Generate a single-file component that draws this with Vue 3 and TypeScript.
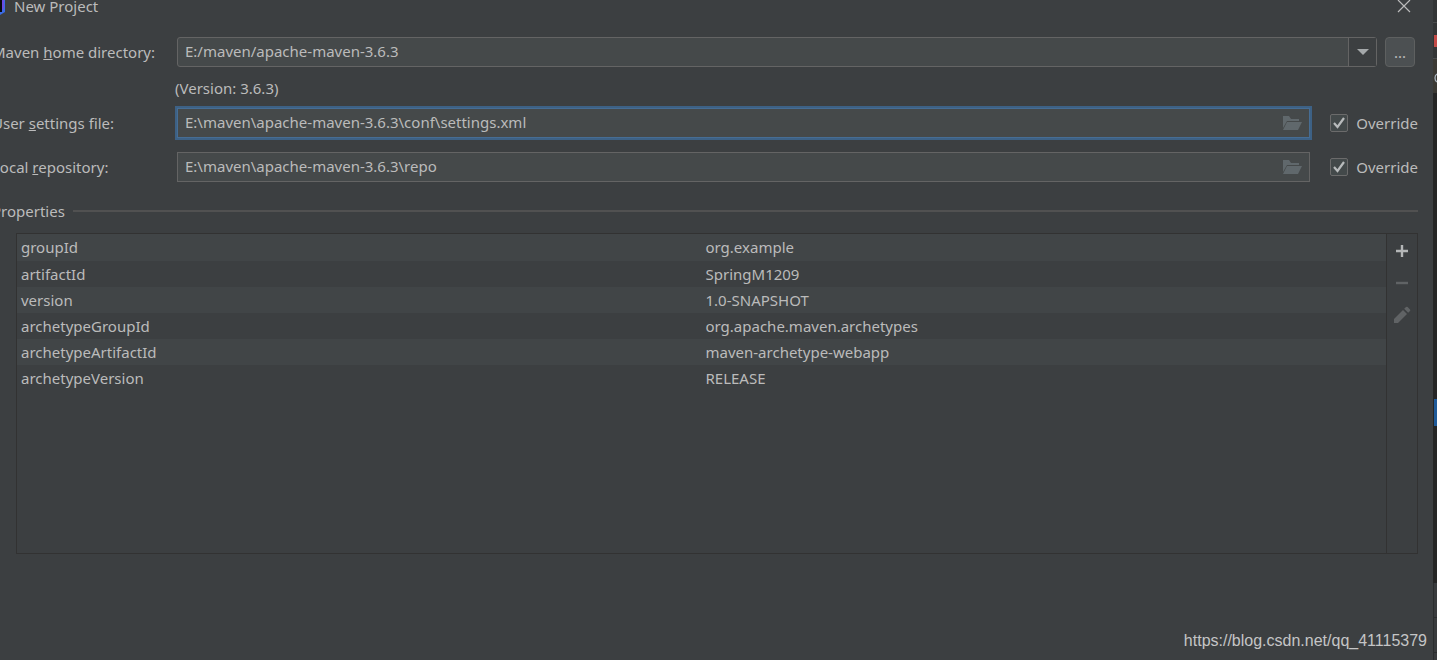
<script setup lang="ts">
import { ref } from 'vue'

interface Property {
  name: string
  value: string
}

const mavenHome = ref('E:/maven/apache-maven-3.6.3')
const settingsFile = ref('E:\\maven\\apache-maven-3.6.3\\conf\\settings.xml')
const repository = ref('E:\\maven\\apache-maven-3.6.3\\repo')
const overrideSettings = ref(true)
const overrideRepository = ref(true)

const properties: Property[] = [
  { name: 'groupId', value: 'org.example' },
  { name: 'artifactId', value: 'SpringM1209' },
  { name: 'version', value: '1.0-SNAPSHOT' },
  { name: 'archetypeGroupId', value: 'org.apache.maven.archetypes' },
  { name: 'archetypeArtifactId', value: 'maven-archetype-webapp' },
  { name: 'archetypeVersion', value: 'RELEASE' },
]
</script>

<template>
  <div class="screen">
    <main class="dialog">
      <header class="titlebar">
        <svg class="logo" width="14" height="15" viewBox="0 0 14 15" aria-hidden="true">
          <path d="M0 0H13V12L8 15H0Z" fill="#3b6be6" />
          <path d="M9 0H12V8L9 12Z" fill="#6a4be0" />
          <path d="M0 0H10V12H0Z" fill="#08080c" />
        </svg>
        <h1>New Project</h1>
        <button class="close" type="button" aria-label="Close">
          <svg width="14" height="14" viewBox="0 0 14 14" aria-hidden="true">
            <path d="M1 0L13 12M13 0L1 12" stroke="#bbbbbb" stroke-width="1.2" fill="none" />
          </svg>
        </button>
      </header>

      <form class="form" @submit.prevent>
        <label for="home">Maven <u>h</u>ome directory:</label>
        <div class="home">
          <div class="combo">
            <input id="home" v-model="mavenHome" type="text" spellcheck="false" />
            <button class="arrow" type="button" aria-label="Show Maven homes">
              <svg width="12" height="7" viewBox="0 0 12 7" aria-hidden="true">
                <path d="M0 0H12L6 6Z" fill="#a4a8aa" />
              </svg>
            </button>
          </div>
          <button class="browse" type="button" aria-label="Browse">...</button>
        </div>

        <p class="version">(Version: 3.6.3)</p>

        <label for="settings">User <u>s</u>ettings file:</label>
        <div class="path">
          <div class="field focused">
            <input id="settings" v-model="settingsFile" type="text" spellcheck="false" />
            <button class="folder" type="button" aria-label="Choose settings file">
              <svg width="20" height="16" viewBox="0 0 20 16" aria-hidden="true">
                <path d="M1 1H7L9 4H17V6H5L1 13Z" fill="#60686c" />
                <path d="M5 7H20L16 15H1Z" fill="#60686c" />
              </svg>
            </button>
          </div>
          <label class="override">
            <span class="check">
              <input v-model="overrideSettings" type="checkbox" />
              <svg width="18" height="18" viewBox="0 0 18 18" aria-hidden="true">
                <path d="M4 9L7.500 13L14 4" fill="none" stroke="#b8bbbc" stroke-width="2.2" />
              </svg>
            </span>
            <span>Override</span>
          </label>
        </div>

        <label for="repository">Local <u>r</u>epository:</label>
        <div class="path">
          <div class="field">
            <input id="repository" v-model="repository" type="text" spellcheck="false" />
            <button class="folder" type="button" aria-label="Choose repository">
              <svg width="20" height="16" viewBox="0 0 20 16" aria-hidden="true">
                <path d="M1 1H7L9 4H17V6H5L1 13Z" fill="#60686c" />
                <path d="M5 7H20L16 15H1Z" fill="#60686c" />
              </svg>
            </button>
          </div>
          <label class="override">
            <span class="check">
              <input v-model="overrideRepository" type="checkbox" />
              <svg width="18" height="18" viewBox="0 0 18 18" aria-hidden="true">
                <path d="M4 9L7.500 13L14 4" fill="none" stroke="#b8bbbc" stroke-width="2.2" />
              </svg>
            </span>
            <span>Override</span>
          </label>
        </div>
      </form>

      <h2 class="section">Properties</h2>

      <section class="panel">
        <div class="list">
          <table aria-label="Properties">
            <tbody>
              <tr v-for="property in properties" :key="property.name">
                <td>{{ property.name }}</td>
                <td>{{ property.value }}</td>
              </tr>
            </tbody>
          </table>
        </div>
        <div class="tools">
          <button type="button" aria-label="Add">
            <svg width="20" height="20" viewBox="0 0 20 20" aria-hidden="true">
              <path d="M10 4V16M4 10H16" stroke="#b4b6b7" stroke-width="2.4" />
            </svg>
          </button>
          <button type="button" aria-label="Remove" disabled>
            <svg width="20" height="20" viewBox="0 0 20 20" aria-hidden="true">
              <path d="M4 10H16" stroke="#606365" stroke-width="2.4" />
            </svg>
          </button>
          <button type="button" aria-label="Edit" disabled>
            <svg width="20" height="20" viewBox="0 0 20 20" aria-hidden="true">
              <path d="M2 14L11 5L15 9L6 18H2Z" fill="#606365" />
              <path d="M12.2 3.8L14 2Q14.800 1.300 15.600 2L18 4.400Q18.700 5.200 18 6L16.200 7.800Z" fill="#606365" />
            </svg>
          </button>
        </div>
      </section>
    </main>

    <!-- Sliver of the IDE window behind the dialog -->
    <div class="behind" aria-hidden="true">
      <svg width="4" height="93" viewBox="0 0 4 93">
        <path d="M0 0H4V59H0Z" fill="#333536" />
        <path d="M0 22H4V23H0ZM0 58H4V59H0Z" fill="#4a4c4d" />
        <path d="M1 35H4V47H1Z" fill="#c24a47" />
        <path d="M0 59H4V93H0Z" fill="#3b3934" />
        <path d="M4 74Q2 75 2 78Q2 81 4 82" fill="none" stroke="#a9b4bf" stroke-width="1.3" />
      </svg>
      <div class="editor"></div>
      <div class="selected"></div>
      <div class="editor short"></div>
      <div class="status"></div>
    </div>

    <a class="watermark" href="https://blog.csdn.net/qq_41115379">https://blog.csdn.net/qq_41115379</a>
  </div>
</template>

<style>
body {
  margin: 0;
  background: #3c3f41;
}
</style>

<style scoped>
.screen {
  position: relative;
  display: flex;
  height: 100vh;
  overflow: hidden;
  background: #3c3f41;
  color: #bbbbbb;
  font: 15px/20px "Noto Sans", "Open Sans", sans-serif;
}

.screen * {
  box-sizing: border-box;
}

button,
input {
  margin: 0;
  padding: 0;
  border: 0;
  background: none;
  color: inherit;
  font: inherit;
  outline: 0;
}

svg {
  display: block;
}

.dialog {
  flex: 1;
  display: flex;
  flex-direction: column;
  min-width: 0;
  margin-left: -8px;
  padding: 0 15px 106px 0;
}

.titlebar {
  display: flex;
  align-items: flex-start;
  height: 37px;
}

.logo {
  margin-right: 8px;
}

h1 {
  margin: 0 auto 0 0;
  font: inherit;
  line-height: 12px;
}

.close {
  margin-right: 7px;
}

.form {
  display: grid;
  grid-template-columns: 177px 1fr;
  grid-template-rows: 30px 13px 30px 30px;
  row-gap: 14px;
  align-items: center;
}

.form > label {
  white-space: nowrap;
}

.home,
.path {
  display: flex;
  gap: 8px;
  padding-left: 8px;
  height: 30px;
}

.home {
  padding-right: 3px;
}

.combo {
  flex: 1;
  display: flex;
  border: 1px solid #646464;
  border-radius: 3px;
  background: #45494a;
}

.combo input,
.field input {
  flex: 1;
  min-width: 0;
  padding: 0 7px 2px;
}

.arrow {
  display: grid;
  place-items: center;
  width: 28px;
  border-left: 1px solid #646464;
  background: #3c3f41;
}

.browse {
  width: 30px;
  border: 1px solid #5e6060;
  border-radius: 4px;
  background: #4c5052;
}

.version {
  grid-column: 2;
  margin: 0 0 0 6px;
  line-height: 12px;
}

.path {
  gap: 20px;
}

.field {
  flex: 1;
  display: flex;
  border: 1px solid #646464;
  background: #45494a;
}

.focused {
  border-color: #466d94;
  box-shadow: 0 0 0 2px #3d6185;
}

.folder {
  width: 34px;
  display: grid;
  place-items: center;
}

.override {
  display: flex;
  align-items: center;
  gap: 8px;
}

.check {
  display: grid;
}

.check > * {
  grid-area: 1 / 1;
}

.check input {
  appearance: none;
  width: 18px;
  height: 18px;
  border: 1px solid #6b6b6b;
  border-radius: 2px;
  background: #43494a;
}

.check svg {
  visibility: hidden;
  pointer-events: none;
}

.check input:checked + svg {
  visibility: visible;
}

.section {
  display: flex;
  align-items: center;
  gap: 8px;
  margin: 19px 0 12px;
  font: inherit;
}

.section::after {
  content: "";
  flex: 1;
  height: 2px;
  background: #515151;
}

.panel {
  flex: 1;
  display: flex;
  margin-left: 24px;
  border: 1px solid #323232;
}

.list {
  flex: 1;
}

table {
  width: 100%;
  table-layout: fixed;
  border-collapse: collapse;
}

td {
  height: 26px;
  padding: 0 4px 1px;
}

tr:first-child td {
  height: 27px;
}

tr:nth-child(odd) {
  background: #414547;
}

.tools {
  width: 31px;
  border-left: 1px solid #323232;
  display: flex;
  flex-direction: column;
  align-items: center;
  gap: 12px;
  padding-top: 7px;
}

.behind {
  display: flex;
  flex-direction: column;
  width: 4px;
  background: #252525;
}

.editor {
  flex: 306;
}

.selected {
  height: 27px;
  margin-left: 1px;
  background: #1f5a99;
}

.short {
  flex: 157;
}

.status {
  height: 77px;
  border-left: 1px solid #2b2d2e;
  background: linear-gradient(#393b3d 34px, #2b2d2e 34px 35px, #393b3d 35px 69px, #2b2d2e 69px 70px, #393b3d 70px);
}

.watermark {
  position: absolute;
  right: 10px;
  bottom: 9px;
  color: #c4c5c6;
  font: 16px/20px "Liberation Sans", Arial, sans-serif;
  text-decoration: none;
}
</style>
